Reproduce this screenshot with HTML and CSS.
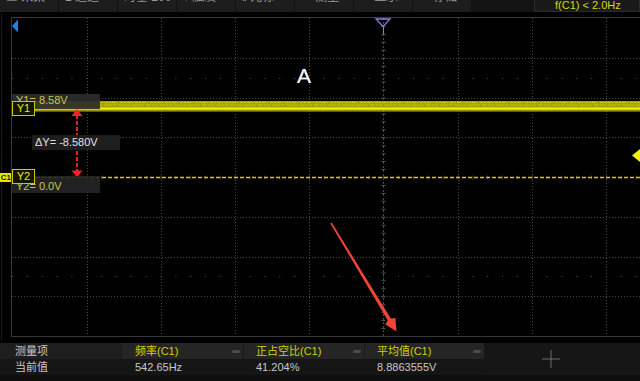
FILE: index.html
```html
<!DOCTYPE html>
<html>
<head>
<meta charset="utf-8">
<link rel="stylesheet" href="styles.css">
</head>
<body>
<div class="screen">
  <div class="topbar">
    <div class="tb-item"><span>▦ 采集</span></div>
    <div class="tb-item"><span>1 通道</span></div>
    <div class="tb-item"><span>时基 200</span></div>
    <div class="tb-item"><span>↑ 触发</span></div>
    <div class="tb-item"><span>‖ 光标</span></div>
    <div class="tb-item"><span>▭ 测量</span></div>
    <div class="tb-item"><span>▭ 显示</span></div>
    <div class="tb-item"><span>▭ 存储</span></div>
    <div class="tb-blank"></div>
    <div class="tb-freq">f(C1) &lt; 2.0Hz</div>
  </div>

  <div class="scope">
    <svg class="canvas" width="640" height="327" viewBox="0 13 640 327" xmlns="http://www.w3.org/2000/svg">
      <line x1="1.5" y1="13" x2="1.5" y2="340" stroke="#1a1a1a"/>
      <path d="M11.5 17.5H640M11.5 17.5V336.5M11.5 336.5H640" stroke="#383838" fill="none"/>
      <g stroke="#4a4a4a" stroke-dasharray="1 2" fill="none">
        <path d="M87.5 18V336M161.5 18V336M235.5 18V336M309.5 18V336M458.5 18V336M532.5 18V336M606.5 18V336"/>
        <path d="M12 58.5H640M12 98.5H640M12 137.5H640M12 217.5H640M12 257.5H640M12 296.5H640"/>
      </g>
      <path d="M12 78.5H640M12 276.5H640" stroke="#505050" stroke-dasharray="1 13.85"/>
      <path d="M383.5 18V336" stroke="#4c4c4c" stroke-dasharray="2 2"/>
      <path d="M383.5 18V336" stroke="#555" stroke-width="4" stroke-dasharray="1 6.95"/>
      <path d="M12 177.5H640" stroke="#444" stroke-width="4" stroke-dasharray="1 13.85"/>
      <path d="M12 177.5H640" stroke="#d0d000" stroke-width="1.3" stroke-dasharray="4 2"/>

      <path d="M376 19H390L383 26.5Z" stroke="#8080e0" stroke-width="1.3" fill="none"/>
      <path d="M383.5 26.5V34" stroke="#8080e0"/>
      <path d="M12 26L18 19.5V32.5Z" fill="#1f80e8"/>
      <path d="M640 149V162L632 155.5Z" fill="#f2f200"/>

      <rect x="34" y="101" width="606" height="10.5" fill="#a2a200"/>
      <path d="M34 102.5H640" stroke="#d0d000" stroke-dasharray="2 1 4 1 1 2 3 1"/>
      <path d="M34 105H640" stroke="#bcbc00" stroke-width="1.5" stroke-dasharray="5 1 2 1 3 2"/>
      <path d="M34 108.5H640" stroke="#f6f600" stroke-width="2"/>
      <path d="M34 111H640" stroke="#707000" stroke-dasharray="1 2 2 1"/>

      <path d="M77 115V171" stroke="#e82020" stroke-width="2" stroke-dasharray="4 2"/>
      <path d="M71.5 116H82.5L77 109Z" fill="#ff2020"/>
      <path d="M71.5 170.5H82.5L77 177.5Z" fill="#ff2020"/>

      <polygon points="330.3,223.4 331.7,222.6 390.8,318.6 395.4,318.1 396.5,331.5 385.2,324.3 387.8,320.4" fill="#f04535"/>
    </svg>

    <div class="lbl lbl-y1">Y1= 8.58V</div>
    <div class="ybox ybox-1">Y1</div>
    <div class="lbl lbl-dy">ΔY= -8.580V</div>
    <div class="lbl lbl-y2">Y2= 0.0V</div>
    <div class="ybox ybox-2">Y2</div>
    <div class="ctag">C1</div>
    <div class="mark-a">A</div>
  </div>

  <div class="meas">
    <div class="mgrid">
      <div class="cell mh first">测量项</div>
      <div class="cell mh col"><span class="ylw">频率(C1)</span><i class="dash"></i></div>
      <div class="cell mh col sep"><span class="ylw">正占空比(C1)</span><i class="dash"></i></div>
      <div class="cell mh col sep"><span class="ylw">平均值(C1)</span><i class="dash"></i></div>
      <div class="plus">
        <svg width="18" height="18" viewBox="0 0 18 18"><path d="M9 0V18M0 9H18" stroke="#6a6a6a" stroke-width="1"/></svg>
      </div>
      <div class="cell mv first">当前值</div>
      <div class="cell mv">542.65Hz</div>
      <div class="cell mv">41.204%</div>
      <div class="cell mv">8.8863555V</div>
    </div>
  </div>
</div>
</body>
</html>
```

FILE: styles.css
```css
* { box-sizing: border-box; }
html, body {
  margin: 0;
  padding: 0;
  background: #000;
}
body {
  width: 640px;
  height: 381px;
  overflow: hidden;
  font-family: "Liberation Sans", "Noto Sans CJK SC", sans-serif;
}
.screen {
  width: 640px;
  height: 381px;
  display: flex;
  flex-direction: column;
  background: #000;
}

/* top bar */
.topbar {
  height: 13px;
  display: flex;
  background: #000;
  flex: none;
}
.tb-item {
  width: 59px;
  height: 12px;
  overflow: hidden;
  background: #1d1d1d;
  border-right: 1px solid #111;
  color: #9a9a9a;
  padding-left: 6px;
}
.tb-item span {
  display: block;
  margin-top: -9px;
  font-size: 12px;
  line-height: 12px;
  white-space: nowrap;
}
.tb-blank {
  width: 62px;
  height: 12px;
  background: #141414;
}
.tb-freq {
  flex: 1;
  height: 12px;
  background: #191919;
  border: 1px solid #2c2c2c;
  border-top: none;
  color: #d8d800;
  font-size: 11px;
  line-height: 11px;
  padding-left: 20px;
  white-space: nowrap;
}

/* scope canvas */
.scope {
  position: relative;
  height: 327px;
  flex: none;
}
.canvas {
  position: absolute;
  left: 0;
  top: 0;
  display: block;
}
.lbl {
  position: absolute;
  font-size: 11px;
  line-height: 13px;
  white-space: nowrap;
}
.lbl-y1 {
  left: 12px;
  top: 81px;
  width: 88px;
  height: 15px;
  background: rgba(44, 44, 44, 0.92);
  color: #c8c84a;
  padding-left: 4px;
}
.lbl-y2 {
  left: 12px;
  top: 163px;
  width: 88px;
  height: 17px;
  background: rgba(36, 36, 36, 0.92);
  color: #c8c84a;
  padding-left: 4px;
  padding-top: 4px;
}
.lbl-dy {
  left: 32px;
  top: 122px;
  width: 88px;
  height: 15px;
  background: #1e1e1e;
  color: #e0e0e0;
  padding-left: 3px;
  padding-top: 1px;
}
.ybox {
  position: absolute;
  left: 12px;
  width: 23px;
  height: 15px;
  border: 1.5px solid #c8c800;
  background: #141400;
  color: #e8e800;
  font-size: 11px;
  line-height: 12px;
  text-align: center;
}
.ybox-1 { top: 88px; }
.ybox-2 { top: 156px; }
.ctag {
  position: absolute;
  left: 0;
  top: 160px;
  width: 11px;
  height: 9px;
  background: #e4e400;
  color: #1a1a1a;
  font-size: 8px;
  line-height: 9px;
  font-weight: bold;
  overflow: hidden;
  text-align: right;
  white-space: nowrap;
}
.mark-a {
  position: absolute;
  left: 297px;
  top: 52px;
  font-size: 21px;
  line-height: 22px;
  color: #fff;
  text-shadow: 0 0 1px #6b6b9a;
}

/* measurement panel */
.meas {
  flex: none;
  height: 41px;
  padding-top: 3px;
  background: #000;
  border-bottom: 6px solid #0e0e0e;
}
.mgrid {
  display: grid;
  grid-template-columns: 122px 121px 121px 120px 1fr;
  grid-template-rows: 16px 16px;
  height: 32px;
}
.cell {
  font-size: 11px;
  line-height: 16px;
  padding-left: 13px;
  white-space: nowrap;
  color: #c8c8c8;
}
.cell.first { padding-left: 15px; }
.mh { background: #1e1e1e; }
.mh.col {
  background: #252525;
  display: flex;
  justify-content: space-between;
  align-items: center;
  padding-right: 3px;
}
.mh.sep { border-left: 1px solid #1a1a1a; padding-left: 12px; }
.ylw { color: #d2d200; }
.dash {
  display: block;
  width: 8px;
  height: 3px;
  border-radius: 1.5px;
  background: #4c4c4c;
}
.mv { background: #151515; }
.plus {
  grid-column: 5;
  grid-row: 1 / span 2;
  background: #161616;
  display: flex;
  align-items: center;
  justify-content: center;
  padding-right: 22px;
}
.plus svg { display: block; }
```
